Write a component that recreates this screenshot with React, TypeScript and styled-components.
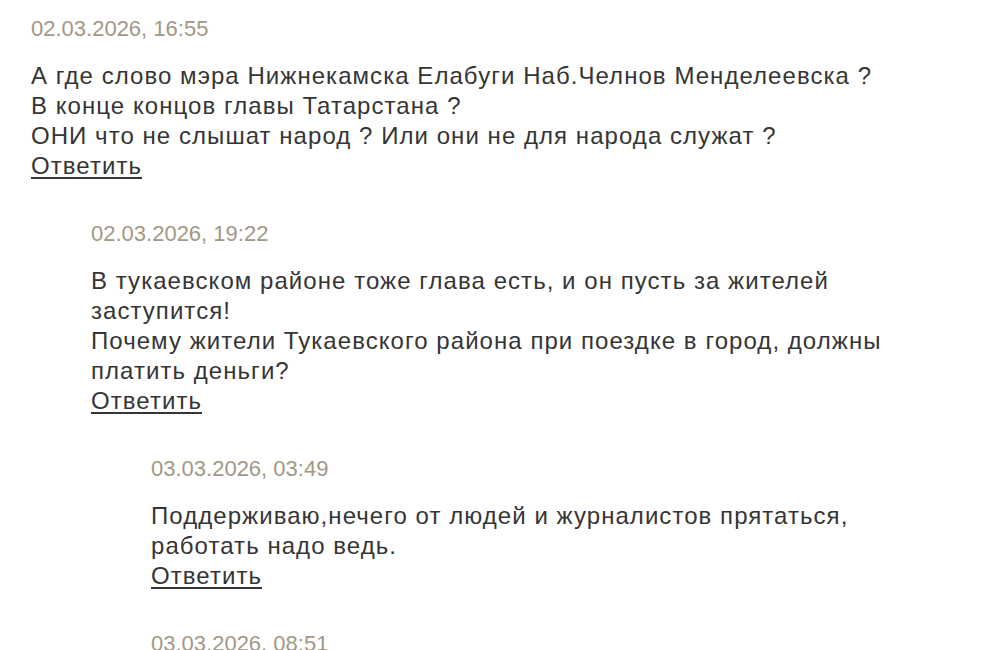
import React from "react";
import styled, { createGlobalStyle } from "styled-components";

const GlobalStyle = createGlobalStyle`
  html, body { margin: 0; padding: 0; background: #ffffff; }
  body { font-family: "Liberation Sans", Arial, Helvetica, sans-serif; }
`;

const Page = styled.div`
  padding: 14px 87px 0 31px;
  box-sizing: border-box;
  width: 997px;
  height: 650px;
  overflow: hidden;
`;

const Replies = styled.div`
  padding-left: 60px;
`;

const Thread = styled.div<{ $spaced?: boolean }>`
  margin-top: ${(p) => (p.$spaced ? "38px" : "0")};
`;

const Comment = styled.article`
  display: flex;
  flex-direction: column;
  align-items: flex-start;
`;

const Date = styled.time`
  font-size: 22px;
  line-height: 30px;
  color: #a29886;
`;

const Body = styled.div`
  margin-top: 17px;
  font-size: 24px;
  line-height: 30px;
  letter-spacing: 1.05px;
  color: #353535;
`;

const Line = styled.p`
  margin: 0;
`;

const Reply = styled.a`
  font-size: 24px;
  line-height: 30px;
  letter-spacing: 1.05px;
  color: #353535;
  text-decoration: underline;
  text-underline-offset: 3px;
  cursor: pointer;
`;

type Item = { date: string; lines: string[]; children?: Item[] };

const data: Item = {
  date: "02.03.2026, 16:55",
  lines: [
    "А где слово мэра Нижнекамска Елабуги Наб.Челнов Менделеевска ?",
    "В конце концов главы Татарстана ?",
    "ОНИ что не слышат народ ? Или они не для народа служат ?",
  ],
  children: [
    {
      date: "02.03.2026, 19:22",
      lines: [
        "В тукаевском районе тоже глава есть, и он пусть за жителей заступится!",
        "Почему жители Тукаевского района при поездке в город, должны платить деньги?",
      ],
      children: [
        {
          date: "03.03.2026, 03:49",
          lines: ["Поддерживаю,нечего от людей и журналистов прятаться, работать надо ведь."],
        },
        {
          date: "03.03.2026, 08:51",
          lines: [],
        },
      ],
    },
  ],
};

const CommentTree: React.FC<{ item: Item; spaced?: boolean }> = ({ item, spaced }) => (
  <Thread $spaced={spaced}>
    <Comment>
      <Date>{item.date}</Date>
      {item.lines.length > 0 && (
        <Body>
          {item.lines.map((l, i) => (
            <Line key={i}>{l}</Line>
          ))}
          <Reply>Ответить</Reply>
        </Body>
      )}
    </Comment>
    {item.children && item.children.length > 0 && (
      <Replies>
        {item.children.map((c, i) => (
          <CommentTree key={i} item={c} spaced />
        ))}
      </Replies>
    )}
  </Thread>
);

export default function App() {
  return (
    <>
      <GlobalStyle />
      <Page>
        <CommentTree item={data} />
      </Page>
    </>
  );
}
